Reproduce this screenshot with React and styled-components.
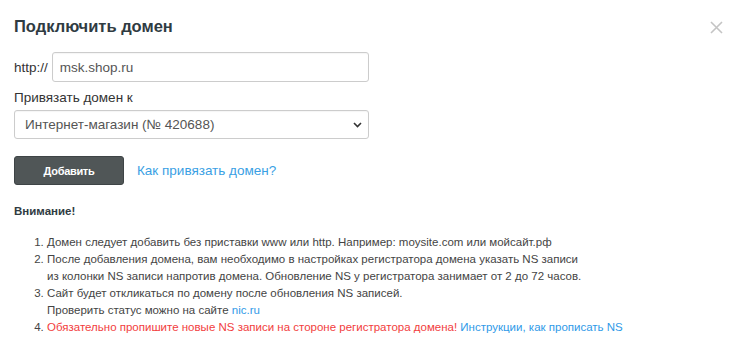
import React from "react";
import styled, { createGlobalStyle } from "styled-components";

const Global = createGlobalStyle`
  html, body { margin: 0; padding: 0; background: #fff; }
  body { font-family: "Liberation Sans", Arial, sans-serif; color: #333; }
  * { box-sizing: border-box; }
`;

const Modal = styled.div`
  position: relative;
  width: 750px;
  height: 346px;
  padding: 16px 14px 0 14px;
`;

const Title = styled.h2`
  margin: 0;
  font-size: 16.5px;
  line-height: 20px;
  font-weight: 700;
  color: #2f3b42;
`;

const Close = styled.button`
  position: absolute;
  top: 19px;
  right: 26px;
  width: 16px;
  height: 16px;
  padding: 0;
  border: 0;
  background: none;
  cursor: pointer;
  display: flex;
  align-items: center;
  justify-content: center;
`;

const Form = styled.div`
  width: 355px;
  margin-top: 16px;
  display: flex;
  flex-direction: column;
`;

const Row = styled.div`
  display: flex;
  align-items: center;
  gap: 4px;
`;

const Prefix = styled.span`
  font-size: 13.5px;
  color: #333;
`;

const Field = styled.div`
  flex: 1;
  height: 30px;
  border: 1px solid #ccc;
  border-radius: 3px;
  display: flex;
  align-items: center;
  padding: 0 7px;
  font-size: 13.5px;
  color: #555;
  box-shadow: inset 0 1px 1px rgba(0,0,0,0.04);
`;

const Label = styled.div`
  margin-top: 6px;
  font-size: 13.5px;
  line-height: 20px;
  color: #333;
`;

const Select = styled(Field)`
  flex: none;
  margin-top: 2px;
  height: 29px;
  justify-content: space-between;
  padding: 0 6px 0 10px;
`;

const Actions = styled.div`
  display: flex;
  align-items: center;
  gap: 13px;
  margin-top: 17px;
`;

const Button = styled.button`
  width: 110px;
  height: 29px;
  border: 1px solid #3e4446;
  border-radius: 3px;
  background: #505657;
  color: #fff;
  font-family: "Liberation Sans", Arial, sans-serif;
  font-size: 11px;
  font-weight: 700;
  letter-spacing: -0.3px;
  padding: 0;
`;

const Link = styled.a`
  color: ${(p) => (p.$small ? "#2f9ae8" : "#3a9fe4")};
  text-decoration: none;
  font-size: ${(p) => (p.$small ? "11.5px" : "13.5px")};
`;

const Warn = styled.div`
  margin-top: 19px;
  font-size: 11.5px;
  line-height: 14px;
  font-weight: 700;
  color: #2f3b42;
`;

const List = styled.ol`
  margin: 16px 0 0 0;
  padding-left: 33px;
  font-size: 11.5px;
  line-height: 17px;
  color: #444;
`;

const Item = styled.li`
  padding-left: 0;
`;

const Red = styled.span`
  color: #f23d3d;
`;

export default function App() {
  return (
    <>
      <Global />
      <Modal>
        <Title>Подключить домен</Title>
        <Close aria-label="close">
          <svg width="13" height="13" viewBox="0 0 13 13">
            <path d="M1 1L12 12M12 1L1 12" stroke="#c4c4c4" strokeWidth="1.6" />
          </svg>
        </Close>
        <Form>
          <Row>
            <Prefix>http://</Prefix>
            <Field>msk.shop.ru</Field>
          </Row>
          <Label>Привязать домен к</Label>
          <Select>
            <span>Интернет-магазин (№ 420688)</span>
            <svg width="9" height="6" viewBox="0 0 9 6">
              <path d="M1 1L4.5 4.5L8 1" fill="none" stroke="#333" strokeWidth="1.6" />
            </svg>
          </Select>
        </Form>
        <Actions>
          <Button>Добавить</Button>
          <Link href="#">Как привязать домен?</Link>
        </Actions>
        <Warn>Внимание!</Warn>
        <List>
          <Item>Домен следует добавить без приставки www или http. Например: moysite.com или мойсайт.рф</Item>
          <Item>
            После добавления домена, вам необходимо в настройках регистратора домена указать NS записи
            <br />
            из колонки NS записи напротив домена. Обновление NS у регистратора занимает от 2 до 72 часов.
          </Item>
          <Item>
            Сайт будет откликаться по домену после обновления NS записей.
            <br />
            Проверить статус можно на сайте <Link $small href="#">nic.ru</Link>
          </Item>
          <Item>
            <Red>Обязательно пропишите новые NS записи на стороне регистратора домена!</Red>{" "}
            <Link $small href="#">Инструкции, как прописать NS</Link>
          </Item>
        </List>
      </Modal>
    </>
  );
}
